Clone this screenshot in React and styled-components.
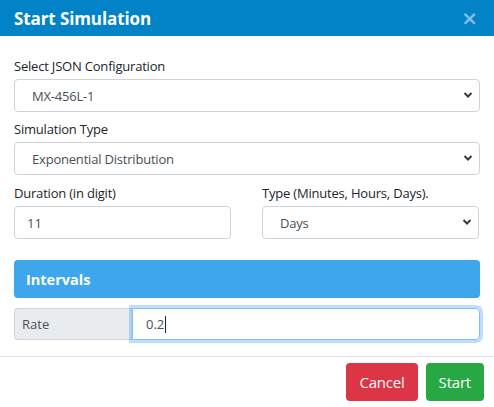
import React from "react";
import styled, { createGlobalStyle } from "styled-components";

const Global = createGlobalStyle`
  html, body { margin: 0; padding: 0; background: #fff; }
  body { font-family: "Open Sans", "Noto Sans", sans-serif; color: #212529; }
  * { box-sizing: border-box; }
`;

const Modal = styled.div`
  width: 494px;
  height: 407px;
  background: #fff;
  display: flex;
  flex-direction: column;
  overflow: hidden;
`;

const Header = styled.div`
  height: 36px;
  background: #0283c8;
  display: flex;
  align-items: center;
  justify-content: space-between;
  padding: 0 14px 0 14px;
`;

const Title = styled.h2`
  margin: 0;
  font-size: 17px;
  font-weight: 700;
  color: #fff;
  letter-spacing: -0.1px;
`;

const Close = styled.button`
  border: 0;
  background: none;
  padding: 0;
  color: rgba(255, 255, 255, 0.5);
  font-size: 20px;
  font-weight: 700;
  line-height: 1;
  margin-right: 2px;
  font-family: "DejaVu Sans", sans-serif;
`;

const Body = styled.div`
  padding: 20px 14px 0 14px;
  display: flex;
  flex-direction: column;
`;

const Group = styled.div`
  display: flex;
  flex-direction: column;
  margin-bottom: 7px;
`;

const Row = styled.div`
  display: grid;
  grid-template-columns: 217px 217px;
  column-gap: 31px;
  padding-top: 1px;
`;

const Label = styled.label`
  font-size: 13px;
  line-height: 20px;
  margin-bottom: 3px;
  color: #212529;
  letter-spacing: -0.2px;
`;

const SelectWrap = styled.div`
  position: relative;
`;

const Select = styled.div`
  height: 33px;
  border: 1px solid #ced4da;
  border-radius: 4px;
  font-size: 13px;
  color: #495057;
  display: flex;
  align-items: center;
  padding-left: 17px;
  letter-spacing: -0.2px;
`;

const Chevron = styled.svg`
  position: absolute;
  right: 7px;
  top: 12px;
  width: 10px;
  height: 8px;
`;

const Input = styled.div`
  height: 33px;
  border: 1px solid #ced4da;
  border-radius: 4px;
  font-size: 13px;
  color: #495057;
  display: flex;
  align-items: center;
  padding-left: 12px;
`;

const SectionHead = styled.div`
  margin-top: 14px;
  height: 38px;
  border-radius: 4px;
  background: #3ea6ea;
  color: #fff;
  font-weight: 700;
  font-size: 14.5px;
  display: flex;
  align-items: center;
  padding-left: 12px;
`;

const InputGroup = styled.div`
  margin-top: 10px;
  display: flex;
  height: 32px;
`;

const Addon = styled.div`
  width: 118px;
  background: #e9ecef;
  border: 1px solid #ced4da;
  border-right: 0;
  border-radius: 4px 0 0 4px;
  font-size: 13px;
  color: #495057;
  display: flex;
  align-items: center;
  padding-left: 7px;
`;

const FocusInput = styled.div`
  flex: 1;
  border: 1px solid #80bdff;
  border-radius: 0 4px 4px 0;
  box-shadow: 0 0 0 3px rgba(0, 123, 255, 0.25);
  font-size: 13px;
  color: #495057;
  display: flex;
  align-items: center;
  padding-left: 13px;
`;

const Caret = styled.span`
  display: inline-block;
  width: 1px;
  height: 17px;
  background: #212529;
  margin-left: 1px;
`;

const Footer = styled.div`
  margin-top: 16px;
  border-top: 1px solid #dee2e6;
  display: flex;
  justify-content: flex-end;
  gap: 8px;
  padding: 6px 10px 0 0;
`;

const Button = styled.button`
  height: 38px;
  border: 0;
  border-radius: 4px;
  color: #fff;
  font-family: "Open Sans", "Noto Sans", sans-serif;
  font-size: 15px;
  letter-spacing: -0.2px;
  padding: 0 ${(p) => p.$px}px;
  background: ${(p) => p.$bg};
`;

const Arrow = () => (
  <Chevron viewBox="0 0 10 8">
    <path d="M1.5 2 L5 5.5 L8.5 2" fill="none" stroke="#343a40" strokeWidth="2" />
  </Chevron>
);

const Dropdown = ({ value }) => (
  <SelectWrap>
    <Select>{value}</Select>
    <Arrow />
  </SelectWrap>
);

export default function App() {
  return (
    <Modal>
      <Global />
      <Header>
        <Title>Start Simulation</Title>
        <Close>×</Close>
      </Header>
      <Body>
        <Group>
          <Label>Select JSON Configuration</Label>
          <Dropdown value="MX-456L-1" />
        </Group>
        <Group>
          <Label>Simulation Type</Label>
          <Dropdown value="Exponential Distribution" />
        </Group>
        <Row>
          <Group>
            <Label>Duration (in digit)</Label>
            <Input>11</Input>
          </Group>
          <Group>
            <Label>Type (Minutes, Hours, Days).</Label>
            <Dropdown value="Days" />
          </Group>
        </Row>
        <SectionHead>Intervals</SectionHead>
        <InputGroup>
          <Addon>Rate</Addon>
          <FocusInput>
            0.2<Caret />
          </FocusInput>
        </InputGroup>
      </Body>
      <Footer>
        <Button $bg="#dc3545" $px={13}>Cancel</Button>
        <Button $bg="#28a745" $px={13}>Start</Button>
      </Footer>
    </Modal>
  );
}
